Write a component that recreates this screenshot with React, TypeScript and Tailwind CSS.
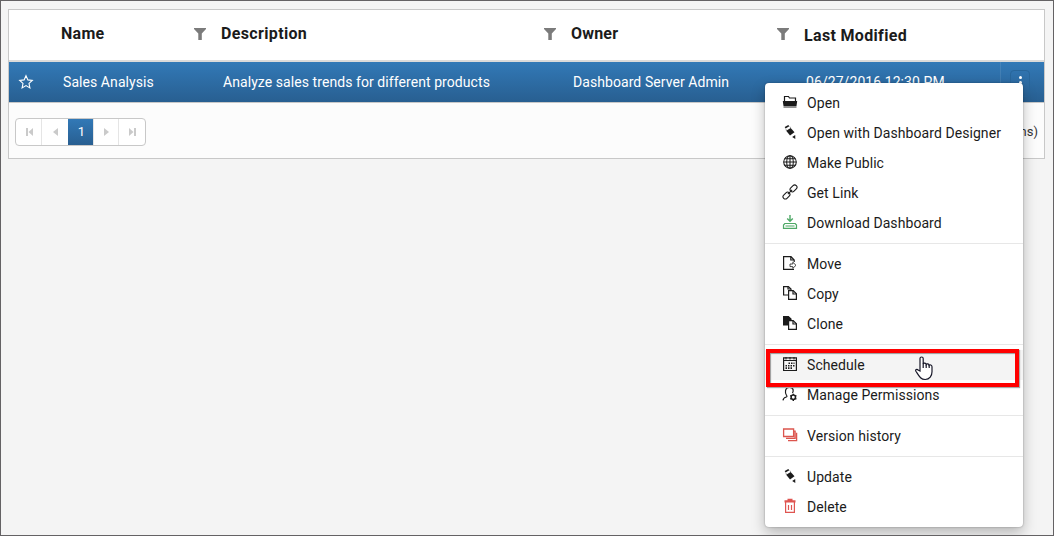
import type { ReactNode } from "react";

const Svg = ({ children, className = "" }: { children: ReactNode; className?: string }) => (
  <svg viewBox="0 0 16 16" className={`h-4 w-4 shrink-0 ${className}`} fill="none" stroke="currentColor" strokeWidth="1.2">
    {children}
  </svg>
);

const Folder = () => (
  <Svg>
    <path d="M2.500 7V2.500H6.500L7.500 4H13.500V7" />
    <path d="M.8 7h14.400l-.7 5H1.500z" fill="currentColor" stroke="none" />
    <path d="M1.500 13h13" stroke="#777" strokeWidth="1.600" />
  </Svg>
);
const Pencil = () => (
  <Svg>
    <g fill="currentColor" stroke="none">
      <path d="M2.700 3 6.300 1l1 1.300-3.800 2.300z" />
      <path d="M4.200 6.700 8.700 4l3.800 4.300-4.500 3.200z" />
      <path d="m10.200 13 3-2 .1 4z" />
    </g>
    <path d="m4 4.800.3 1.800m3.500-4.100 1 1.500" strokeWidth=".4" />
  </Svg>
);
const Globe = () => (
  <Svg>
    <g strokeWidth="1.050">
      <circle cx="8" cy="8" r="6.300" />
      <ellipse cx="8" cy="8" rx="3.300" ry="6.300" />
      <path d="M8 1.700v12.600M1.700 8h12.600M2.700 4.700h10.600M2.700 11.300h10.600" />
    </g>
  </Svg>
);
const LinkIcon = () => (
  <Svg>
    <g transform="rotate(-45 8 8)" strokeWidth="1.100">
      <rect x="-.9" y="5.700" width="7.800" height="4.600" rx="2.300" />
      <rect x="9.100" y="5.700" width="7.800" height="4.600" rx="2.300" />
      <path d="M5 8h6" />
    </g>
  </Svg>
);
const Download = () => (
  <Svg className="text-[#4fa967]">
    <path d="M8 1v6M5.200 4.500 8 7.200l2.800-2.700" strokeWidth="1.400" />
    <path d="M1.500 14.400V11l1.300-1.500h10.400l1.300 1.500v3.400z" />
    <path d="M3.500 12h9" strokeWidth="1" />
  </Svg>
);
const Move = () => (
  <Svg>
    <path d="M12 14.400H1.600V1.600H9L12.200 5v2M8.800 1.800V5h3" />
    <path d="M8 9h2.800V7.200L14 10.300l-3.200 3.100v-1.800H8z" strokeWidth=".8" />
  </Svg>
);
const Pages = ({ filled = false }: { filled?: boolean }) => (
  <Svg>
    <path d="M1.600 1.600h4.800L9 4v6H1.600z" fill={filled ? "currentColor" : "none"} />
    <path d="M6.600 5.600h4.600l3.200 3.200v5.600H6.600z" fill="white" />
    <path d="M11 5.800V9h3.300M6 1.800V4h2.800" />
  </Svg>
);
const Calendar = () => (
  <Svg>
    <path d="M1.600 1.800h12.800v12.700H1.600zM1.600 4.500h12.800" />
    <path d="M4 1v2.500M8 1v2.500M12 1v2.500" strokeWidth="1" />
    <path d="M6.500 7.300h6M3.500 9.700h9M3.500 12.100h7" strokeWidth="1.600" strokeDasharray="1.500 1" />
  </Svg>
);
const UserGear = () => (
  <Svg>
    <path d="M1 14.400c.2-2.200 1.500-2.900 3.300-3.400.9-.4.800-1.100.2-1.700C3 7.700 2.500 1.300 7.300 1.300S11.500 5.200 10.500 7" />
    <circle cx="11.300" cy="11.300" r="2.200" strokeWidth="1.500" />
    <path d="M11.300 7.700V9m0 4.600v1.300m-3.100-5.400 1.100.6m4 2.400 1.100.6m-6.200 0 1.100-.6m4-2.400 1.100-.6" strokeWidth="1.400" />
  </Svg>
);
const Versions = () => (
  <Svg className="text-[#dc554e]">
    <path d="M1.600 2h10v7.500h-10zM12 4.200h1.100v7.200H4M14 6.400h.6v7.200H6" strokeWidth="1.300" />
  </Svg>
);
const Trash = () => (
  <Svg className="text-[#df5551]">
    <path d="M2.500 3.300h11M5.500 1.800h5" strokeWidth="2.200" />
    <path d="M3.600 4v10.400h8.800V4" />
    <path d="M6.500 7v5M9.500 7v5" strokeWidth="1.200" />
  </Svg>
);

const groups: { label: string; icon: ReactNode; active?: boolean }[][] = [
  [
    { label: "Open", icon: <Folder /> },
    { label: "Open with Dashboard Designer", icon: <Pencil /> },
    { label: "Make Public", icon: <Globe /> },
    { label: "Get Link", icon: <LinkIcon /> },
    { label: "Download Dashboard", icon: <Download /> },
  ],
  [
    { label: "Move", icon: <Move /> },
    { label: "Copy", icon: <Pages /> },
    { label: "Clone", icon: <Pages filled /> },
  ],
  [
    { label: "Schedule", icon: <Calendar />, active: true },
    { label: "Manage Permissions", icon: <UserGear /> },
  ],
  [{ label: "Version history", icon: <Versions /> }],
  [
    { label: "Update", icon: <Pencil /> },
    { label: "Delete", icon: <Trash /> },
  ],
];

const Filter = () => (
  <svg viewBox="0 0 12 12" className="h-3 w-3 shrink-0" fill="#7b7b7b">
    <path d="M0 0h12v1L7.800 5.500V12H4.300V5.500L0 1z" />
  </svg>
);

const Header = ({ title, filter = true, className }: { title: string; filter?: boolean; className: string }) => (
  <div className={`flex shrink-0 items-center justify-between text-base font-bold ${className}`}>
    <span>{title}</span>
    {filter && <Filter />}
  </div>
);

const pagerArrows = ["M1 0h2v8H1zM8 0v8L3.500 4z", "M7 0v8L2 4z", "M2 0v8l5-4z", "M1 0v8l4.500-4zM6 0h2v8H6z"];
const PagerCell = ({ d, border }: { d: string; border: string }) => (
  <div className={`flex w-[26px] items-center justify-center pl-px ${border}`}>
    <svg viewBox="0 0 9 8" className="h-2 w-[9px]" fill="#cacaca">
      <path d={d} />
    </svg>
  </div>
);

const Menu = () => (
  <div className="absolute top-[82px] left-[764px] w-[258px] rounded bg-white py-[5px] text-sm tracking-[0.07px] text-[#1b1b1b] shadow-[0_6px_14px_rgba(0,0,0,0.25),0_0_2px_rgba(0,0,0,0.35)]">
    {groups.map((items, i) => (
      <div key={i} className={i ? "mt-[5px] border-t border-[#e7e7e7] pt-[5px]" : ""}>
        {items.map(({ label, icon, active }) => (
          <div key={label} className={`flex h-[30px] items-center gap-[9px] pl-[17px] ${active ? "bg-[#f4f4f4]" : ""}`}>
            <span className="-mt-0.5">{icon}</span>
            <span>{label}</span>
          </div>
        ))}
      </div>
    ))}
    <div className="absolute top-[266px] left-px h-[38px] w-[253px] border-4 border-[#ff0000] shadow-[1px_1px_1px_#aaa,inset_1px_1px_1px_#999]" />
    <svg viewBox="0 0 18 25" className="absolute top-[273px] left-[150px] h-[25px] w-[18px]" fill="white" stroke="#161627" strokeWidth="1.200">
      <path d="M5 15V2.500C5 .5 8.200.5 8.200 2.500V8c.5-1.300 2.800-1 3 .5.600-1 2.600-.7 2.800.7.900-.8 3-.3 3 1.600v5c0 4-2.400 7.700-6.800 7.700-4.500 0-5.800-2.800-9.300-8.300-.8-1.400 1-2.500 2.200-1.200z" />
      <path d="M8.200 7.500V12M11.200 8.500V12M14.200 9.300V12" fill="none" />
    </svg>
  </div>
);

export default function App() {
  return (
    <div className="relative h-[536px] w-[1054px] overflow-hidden border border-[#646264] bg-[#f4f4f4] pt-2 pl-[7px] font-['Roboto',sans-serif] text-sm text-[#1b1b1b]">
      <div className="flex h-[150px] w-[1037px] flex-col border border-[#c8c8c8] bg-[#fcfcfc]">
        <div className="flex h-[52px] shrink-0 border-b-2 border-[#dadada] bg-white pb-[3px] pl-[52px]">
          <Header title="Name" className="w-[145px] tracking-[0.3px]" />
          <Header title="Description" className="ml-[15px] w-[335px] tracking-[0.35px]" />
          <Header title="Owner" className="ml-[15px] w-[218px] tracking-[0.2px]" />
          <Header title="Last Modified" filter={false} className="ml-[15px] pt-1 tracking-[0.33px]" />
        </div>
        <div className="flex h-[41px] shrink-0 items-center border-b border-[#c8c8c8] bg-linear-to-b from-[#3279b7] to-[#285f91] tracking-[0.07px] text-white">
          <div className="flex w-[54px] pl-[9px]">
            <svg viewBox="0 0 16 16" className="h-4 w-4" fill="none" stroke="white" strokeWidth="1.100">
              <path d="m8 1.700 1.900 4.200 4.400.5-3.300 3 .9 4.500L8 11.600l-3.900 2.300.9-4.500-3.300-3 4.400-.5z" />
            </svg>
          </div>
          <span className="w-40">Sales Analysis</span>
          <span className="w-[350px]">Analyze sales trends for different products</span>
          <span className="w-[233px]">Dashboard Server Admin</span>
          <span className="w-[194px]">06/27/2016 12:30 PM</span>
          <div className="flex h-full flex-1 items-center border-l border-[#ffffff18] pt-[3px] pl-[9px]">
            <div className="flex h-[27px] w-5 flex-col items-center gap-0.5 rounded border border-[#28669b] pt-[5px]">
              <i className="size-[3px] rounded-full bg-white" />
              <i className="size-[3px] rounded-full bg-white" />
              <i className="size-[3px] rounded-full bg-white" />
            </div>
          </div>
        </div>
        <div className="flex flex-1 items-center justify-between pt-[3px] pr-1.5 pl-1.5">
          <div className="flex h-7 w-[131px] overflow-hidden rounded border border-[#c8c8c8] bg-white">
            <PagerCell d={pagerArrows[0]} border="border-r border-[#e5e5e5]" />
            <PagerCell d={pagerArrows[1]} border="" />
            <div className="flex w-[25px] items-center justify-center bg-linear-to-b from-[#3279b7] to-[#285f91] pl-0.5 text-[13px] text-white">1</div>
            <PagerCell d={pagerArrows[2]} border="border-x border-[#e5e5e5]" />
            <PagerCell d={pagerArrows[3]} border="" />
          </div>
          <span className="text-[13px] text-[#333]">1 of 1 pages (1 items)</span>
        </div>
      </div>
      <Menu />
    </div>
  );
}
